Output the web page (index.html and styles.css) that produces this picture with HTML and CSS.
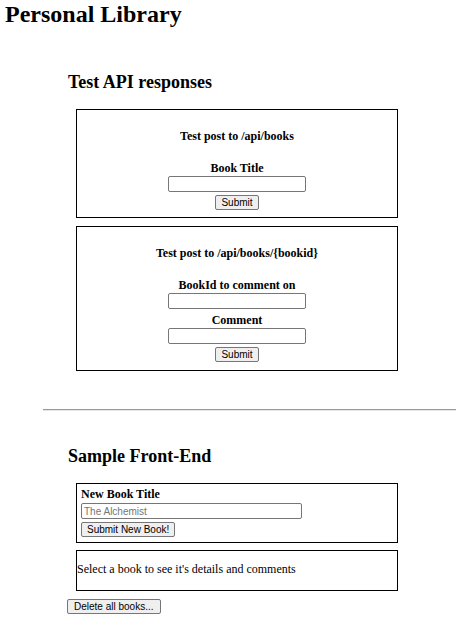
FILE: index.html
```html
<!DOCTYPE html>
<html lang="en">
<head>
<meta charset="utf-8">
<title>Personal Library</title>
<link rel="stylesheet" href="styles.css">
</head>
<body>
<header class="page-header">
  <h1 class="title">Personal Library</h1>
</header>
<section class="section section-api">
  <h2 class="section-title">Test API responses</h2>
  <form class="box test-form" action="/api/books" method="post">
    <h4 class="form-title">Test post to /api/books</h4>
    <label class="field-label" for="title">Book Title</label>
    <input class="text-input" type="text" id="title" name="title">
    <input class="btn" type="submit" value="Submit">
  </form>
  <form class="box test-form test-form-second" action="" method="post">
    <h4 class="form-title">Test post to /api/books/{bookid}</h4>
    <label class="field-label" for="idinputtest">BookId to comment on</label>
    <input class="text-input" type="text" id="idinputtest" name="id">
    <label class="field-label field-label-tight" for="comment">Comment</label>
    <input class="text-input" type="text" id="comment" name="comment">
    <input class="btn" type="submit" value="Submit">
  </form>
</section>
<hr class="divider">
<section class="section section-ui">
  <h2 class="section-title">Sample Front-End</h2>
  <form class="box new-book-form">
    <label class="field-label" for="bookTitleToAdd">New Book Title</label>
    <input class="text-input text-input-wide" type="text" id="bookTitleToAdd" placeholder="The Alchemist">
    <button class="btn" type="submit">Submit New Book!</button>
  </form>
  <div class="box book-detail">
    <p class="detail-title">Select a book to see it's details and comments</p>
  </div>
  <button class="btn btn-delete" type="button">Delete all books...</button>
</section>
</body>
</html>
```

FILE: styles.css
```css
* {
  box-sizing: border-box;
}

html, body {
  background: #ffffff;
}

body {
  margin: 0;
  font-family: "Liberation Serif", "Times New Roman", serif;
  color: #000000;
}

.page-header {
  padding-left: 5px;
}

.title {
  margin: 0;
  font-size: 24px;
  line-height: 28px;
  font-weight: bold;
}

.section {
  margin-left: 68px;
  width: 330px;
}

.section-api {
  margin-top: 44px;
}

.section-title {
  margin: 0;
  font-size: 18px;
  line-height: 21px;
  font-weight: bold;
}

.box {
  margin-left: 8px;
  width: 322px;
  border: 1px solid #000000;
}

.section-api .box {
  margin-top: 16px;
}

.section-api .test-form-second {
  margin-top: 8px;
}

.test-form {
  display: flex;
  flex-direction: column;
  align-items: center;
  padding: 19px 0 7px;
}

.test-form-second {
  padding-bottom: 8px;
}

.form-title {
  margin: 0;
  font-size: 12px;
  line-height: 14px;
  font-weight: bold;
}

.field-label {
  display: block;
  margin-top: 18px;
  font-size: 12px;
  line-height: 14px;
  font-weight: bold;
}

.field-label-tight {
  margin-top: 4px;
}

.text-input {
  display: block;
  width: 138px;
  height: 16px;
  margin: 1px 0 0;
  padding: 0 2px;
  border: 1px solid #767676;
  border-radius: 2px;
  background: #ffffff;
  font-family: "Liberation Sans", Arial, sans-serif;
  font-size: 10px;
  color: #000000;
}

.text-input::placeholder {
  color: #757575;
}

.btn {
  display: block;
  height: 15px;
  margin: 3px 0 0;
  padding: 0 5px;
  border: 1px solid #767676;
  border-radius: 2px;
  background: #efefef;
  font-family: "Liberation Sans", Arial, sans-serif;
  font-size: 10px;
  line-height: 13px;
  color: #000000;
}

.divider {
  margin: 38px 0 0 43px;
  height: 2px;
  border: 0;
  border-top: 1px solid #9a9a9a;
  border-bottom: 1px solid #e6e6e6;
}

.section-ui {
  margin-top: 35px;
}

.section-ui .new-book-form {
  margin-top: 16px;
}

.new-book-form {
  display: flex;
  flex-direction: column;
  align-items: flex-start;
  padding: 3px 4px 5px;
}

.new-book-form .field-label {
  margin-top: 0;
}

.new-book-form .text-input {
  margin-top: 2px;
}

.text-input-wide {
  width: 221px;
}

.book-detail {
  margin-top: 7px;
}

.detail-title {
  margin: 11px 0 14px;
  font-size: 12px;
  line-height: 14px;
}

.btn-delete {
  margin-top: 8px;
  margin-left: -1px;
  padding: 0 6px;
}
```
